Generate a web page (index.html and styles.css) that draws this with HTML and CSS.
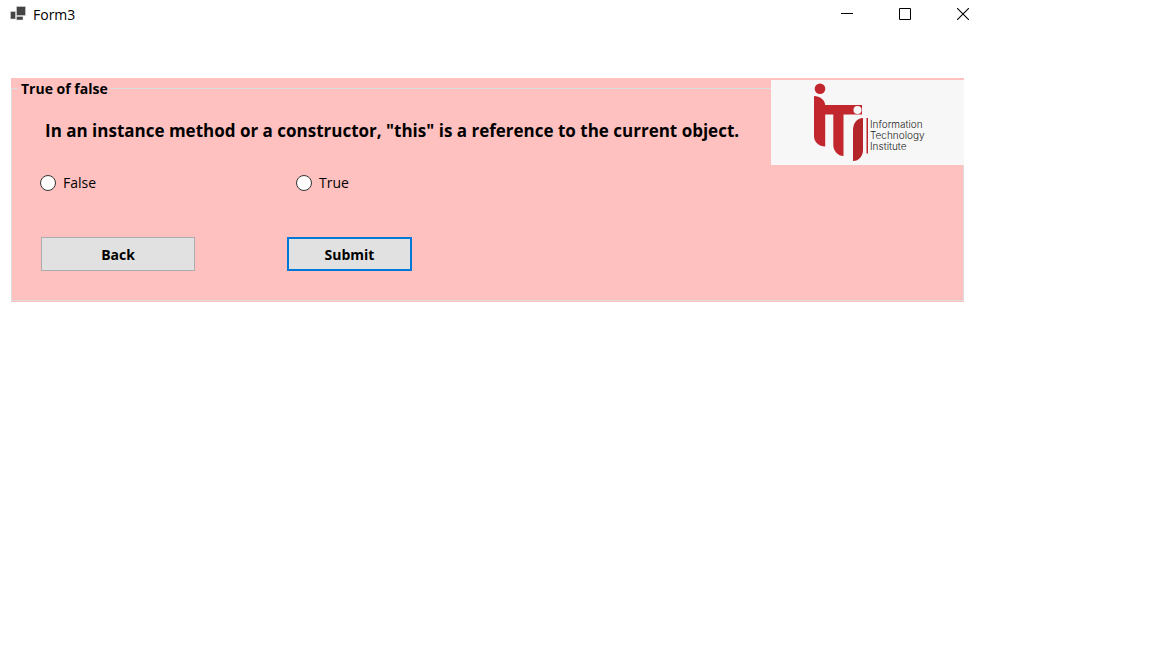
FILE: index.html
```html
<!DOCTYPE html>
<html lang="en">
<head>
<meta charset="utf-8">
<title>Form3</title>
<link rel="stylesheet" href="styles.css">
</head>
<body>
<div class="window">
  <header class="titlebar">
    <svg class="app-icon" width="16" height="16" viewBox="0 0 16 16" aria-hidden="true">
      <g fill="#444" stroke="#ddd" stroke-width="0.5">
        <rect x="6.500" y="0.500" width="9" height="9"/>
        <rect x="0.500" y="5.500" width="5" height="7.500"/>
        <rect x="6.500" y="10.500" width="6.500" height="3.500"/>
      </g>
    </svg>
    <h1 class="title">Form3</h1>
    <button class="caption-button" type="button" aria-label="Minimize">
      <svg width="12" height="12" viewBox="0 0 12 12"><path d="M0 5.5H12" stroke="#000"/></svg>
    </button>
    <button class="caption-button" type="button" aria-label="Maximize">
      <svg width="12" height="12" viewBox="0 0 12 12"><path d="M.5 .5H11.5V11.5H.5Z" fill="none" stroke="#000"/></svg>
    </button>
    <button class="caption-button" type="button" aria-label="Close">
      <svg width="12" height="12" viewBox="0 0 12 12"><path d="M0 0L12 12M12 0L0 12" stroke="#000" stroke-width="1.1"/></svg>
    </button>
  </header>
  <form class="panel">
    <fieldset class="group">
      <legend class="legend">True of false</legend>
      <p class="question">In an instance method or a constructor, "this" is a reference to the current object.</p>
      <div class="options">
        <label class="option"><input class="radio" type="radio" name="answer" value="false">False</label>
        <label class="option"><input class="radio" type="radio" name="answer" value="true">True</label>
      </div>
      <div class="actions">
        <button class="button back" type="button">Back</button>
        <button class="button submit" type="submit">Submit</button>
      </div>
    </fieldset>
    <div class="logo">
      <svg class="mark" width="56" height="80" viewBox="0 0 56 80" aria-hidden="true">
        <g fill="#c1272d">
          <circle cx="7" cy="6.7" r="5.3"/>
          <path d="M1 14C7 14 12 18 12.200 23H49V32.500H30.500V74C25 74 20.300 69 20.300 63V32.500H12.200V64.500C6 64.500 1 60 1 54Z"/>
          <path d="M50 36V68C50 74 46 79 40 79V48C40 41 44 36 50 36Z" fill="#b42529"/>
          <rect x="53.500" y="36" width="1.500" height="35.500"/>
        </g>
        <circle cx="44.500" cy="28" r="4" fill="#f7f7f7"/>
      </svg>
      <p class="logo-text">Information<br>Technology<br>Institute</p>
    </div>
  </form>
</div>
</body>
</html>
```
FILE: styles.css
```css
body {
  margin: 0;
  background: #fff;
  color: #000;
  font: 14px/20px "Open Sans", "Noto Sans", sans-serif;
}

.window {
  margin-right: 160px;
}

.titlebar {
  display: flex;
  align-items: center;
  height: 28px;
  padding-left: 10px;
}

.title {
  flex: 1;
  margin: 0 0 0 7px;
  padding-top: 2px;
  font-size: 14px;
  font-weight: 400;
}

.caption-button {
  display: flex;
  align-items: center;
  justify-content: center;
  width: 58px;
  height: 28px;
  padding: 0;
  border: 0;
  background: none;
}

.panel {
  position: relative;
  margin: 50px 28px 0 11px;
  padding-bottom: 1px;
  background: #ffc0c0;
}

.group {
  min-width: 0;
  margin: 0;
  padding: 0 0 29px;
  border: 1px solid #dcdcdc;
}

.legend {
  margin-left: 6px;
  padding: 0 3px;
  font-weight: 700;
  line-height: 21px;
}

.question {
  margin: 19px 0 0 33px;
  font-size: 17px;
  font-weight: 700;
  line-height: 26px;
}

.options {
  display: flex;
  margin: 29px 0 0 28px;
}

.option {
  display: flex;
  align-items: center;
  gap: 7px;
  width: 256px;
}

.radio {
  appearance: none;
  width: 16px;
  height: 16px;
  margin: 0;
  border: 1px solid #333;
  border-radius: 50%;
  background: #fff;
}

.radio:checked {
  box-shadow: inset 0 0 0 3px #fff;
  background: #333;
}

.actions {
  display: flex;
  gap: 92px;
  margin: 44px 0 0 29px;
}

.button {
  height: 34px;
  padding: 2px 0 0;
  border: 1px solid #adadad;
  background: #e1e1e1;
  color: #000;
  font: inherit;
  font-weight: 700;
}

.back {
  width: 154px;
}

.submit {
  width: 125px;
  border: 2px solid #0078d7;
}

.logo {
  position: absolute;
  top: 2px;
  right: 0;
  display: flex;
  box-sizing: border-box;
  width: 193px;
  height: 85px;
  padding: 2px 0 0 42px;
  background: #f7f7f7;
}

.logo-text {
  margin: 37px 0 0 1px;
  color: #222;
  font: 300 10px/11px Inter, sans-serif;
}
```
